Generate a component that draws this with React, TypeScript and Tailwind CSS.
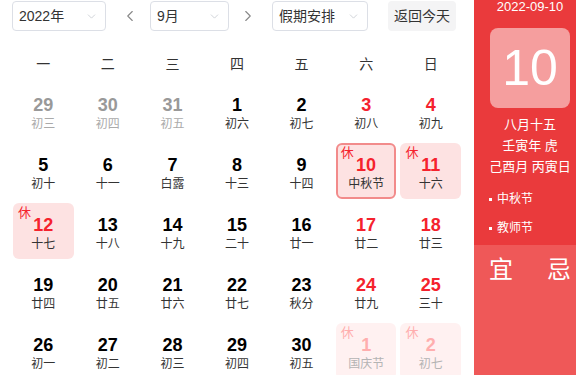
import { ChevronDown, ChevronLeft, ChevronRight } from "lucide-react";

type Day = {
  n: number;
  l: string;
  kind?: "prev" | "next";
  red?: boolean;
  rest?: boolean;
  sel?: boolean;
};

const weeks: Day[][] = [
  [
    { n: 29, l: "初三", kind: "prev" },
    { n: 30, l: "初四", kind: "prev" },
    { n: 31, l: "初五", kind: "prev" },
    { n: 1, l: "初六" },
    { n: 2, l: "初七" },
    { n: 3, l: "初八", red: true },
    { n: 4, l: "初九", red: true },
  ],
  [
    { n: 5, l: "初十" },
    { n: 6, l: "十一" },
    { n: 7, l: "白露" },
    { n: 8, l: "十三" },
    { n: 9, l: "十四" },
    { n: 10, l: "中秋节", red: true, rest: true, sel: true },
    { n: 11, l: "十六", red: true, rest: true },
  ],
  [
    { n: 12, l: "十七", red: true, rest: true },
    { n: 13, l: "十八" },
    { n: 14, l: "十九" },
    { n: 15, l: "二十" },
    { n: 16, l: "廿一" },
    { n: 17, l: "廿二", red: true },
    { n: 18, l: "廿三", red: true },
  ],
  [
    { n: 19, l: "廿四" },
    { n: 20, l: "廿五" },
    { n: 21, l: "廿六" },
    { n: 22, l: "廿七" },
    { n: 23, l: "秋分" },
    { n: 24, l: "廿九", red: true },
    { n: 25, l: "三十", red: true },
  ],
  [
    { n: 26, l: "初一" },
    { n: 27, l: "初二" },
    { n: 28, l: "初三" },
    { n: 29, l: "初四" },
    { n: 30, l: "初五" },
    { n: 1, l: "国庆节", kind: "next", rest: true },
    { n: 2, l: "初七", kind: "next", rest: true },
  ],
];

const weekdays = ["一", "二", "三", "四", "五", "六", "日"];

function Select({ label, w }: { label: string; w: string }) {
  return (
    <div
      className={`${w} h-[30px] flex items-center justify-between pl-[6px] pr-[7px] border border-[#dcdfe6] rounded-[4px] text-[14px] text-[#333]`}
    >
      <span>{label}</span>
      <ChevronDown size={13} strokeWidth={1.2} className="text-[#b8bcc4]" />
    </div>
  );
}

function Cell({ d }: { d: Day }) {
  let box = "";
  let num = "text-black";
  let lunar = "text-[#333]";
  if (d.kind === "prev") {
    num = "text-[#999]";
    lunar = "text-[#aaa]";
  } else if (d.kind === "next") {
    box = "bg-[#fff1f1]";
    num = "text-[#ffaeae]";
    lunar = "text-[#b4b4b4]";
  } else if (d.rest) {
    box = d.sel ? "bg-[#fde2e2] border-2 border-[#f28b8b]" : "bg-[#fde2e2]";
    num = "text-[#f5222d]";
  } else if (d.red) {
    num = "text-[#f5222d]";
  }
  return (
    <div className={`relative h-14 rounded-[6px] flex flex-col items-center ${d.sel ? "pt-[9px]" : "pt-[11px]"} ${box}`}>
      {d.rest && (
        <span
          className={`absolute ${d.sel ? "top-[1px] left-[3px]" : "top-[3px] left-[5px]"} text-[13px] leading-[14px] ${
            d.kind === "next" ? "text-[#ffaeae]" : "text-[#f5222d]"
          }`}
        >
          休
        </span>
      )}
      <span className={`text-[18px] leading-[22px] font-bold ${num}`}>{d.n}</span>
      <span className={`text-[12px] leading-[16px] ${lunar}`}>{d.l}</span>
    </div>
  );
}

export default function App() {
  return (
    <div
      className="w-[576px] h-[375px] overflow-hidden flex bg-white"
      style={{ fontFamily: '"Liberation Sans", "Noto Sans CJK SC", sans-serif' }}
    >
      <div className="w-[474px] shrink-0">
        <div className="flex items-center pl-3 pt-px h-[31px]">
          <Select label="2022年" w="w-[94px]" />
          <ChevronLeft size={18} strokeWidth={1.5} className="text-[#888] ml-[15px]" />
          <div className="ml-[11px]">
            <Select label="9月" w="w-[79px]" />
          </div>
          <ChevronRight size={18} strokeWidth={1.5} className="text-[#888] ml-[10px]" />
          <div className="ml-[15px]">
            <Select label="假期安排" w="w-[96px]" />
          </div>
          <div className="ml-5 w-[68px] h-[30px] rounded-[4px] bg-[#f4f4f5] flex items-center justify-center text-[14px] text-[#333]">
            返回今天
          </div>
        </div>
        <div className="mt-[15px] h-9 px-[13px] grid grid-cols-7 gap-1 items-center text-center text-[14px] text-[#333]">
          {weekdays.map((w) => (
            <span key={w}>{w}</span>
          ))}
        </div>
        <div className="mt-px px-[13px] grid grid-cols-7 gap-1">
          {weeks.flat().map((d, i) => (
            <Cell key={i} d={d} />
          ))}
        </div>
      </div>
      <div className="w-[112px] shrink-0 bg-[#ea3a3c] text-white flex flex-col">
        <div className="h-[14px] leading-[14px] text-[13px] text-center">2022-09-10</div>
        <div className="mt-[14px] mx-auto w-[80px] h-[80px] rounded-[8px] bg-[#f59e9e] flex items-center justify-center text-[50px] leading-none">
          10
        </div>
        <div className="mt-[6px] text-center text-[13px] leading-[21px]">
          <div>八月十五</div>
          <div>壬寅年 虎</div>
          <div>己酉月 丙寅日</div>
        </div>
        <div className="mt-[14px] pl-[15px] text-[12px] flex flex-col gap-[13px]">
          <div className="flex items-center gap-[5px] leading-[16px]">
            <span className="w-[3px] h-[3px] bg-white" />
            中秋节
          </div>
          <div className="flex items-center gap-[5px] leading-[16px]">
            <span className="w-[3px] h-[3px] bg-white" />
            教师节
          </div>
        </div>
        <div className="mt-[9px] flex-1 bg-[#ef5858] flex justify-center gap-[34px] pt-[11px] text-[24px] leading-[28px]">
          <span>宜</span>
          <span>忌</span>
        </div>
      </div>
    </div>
  );
}
